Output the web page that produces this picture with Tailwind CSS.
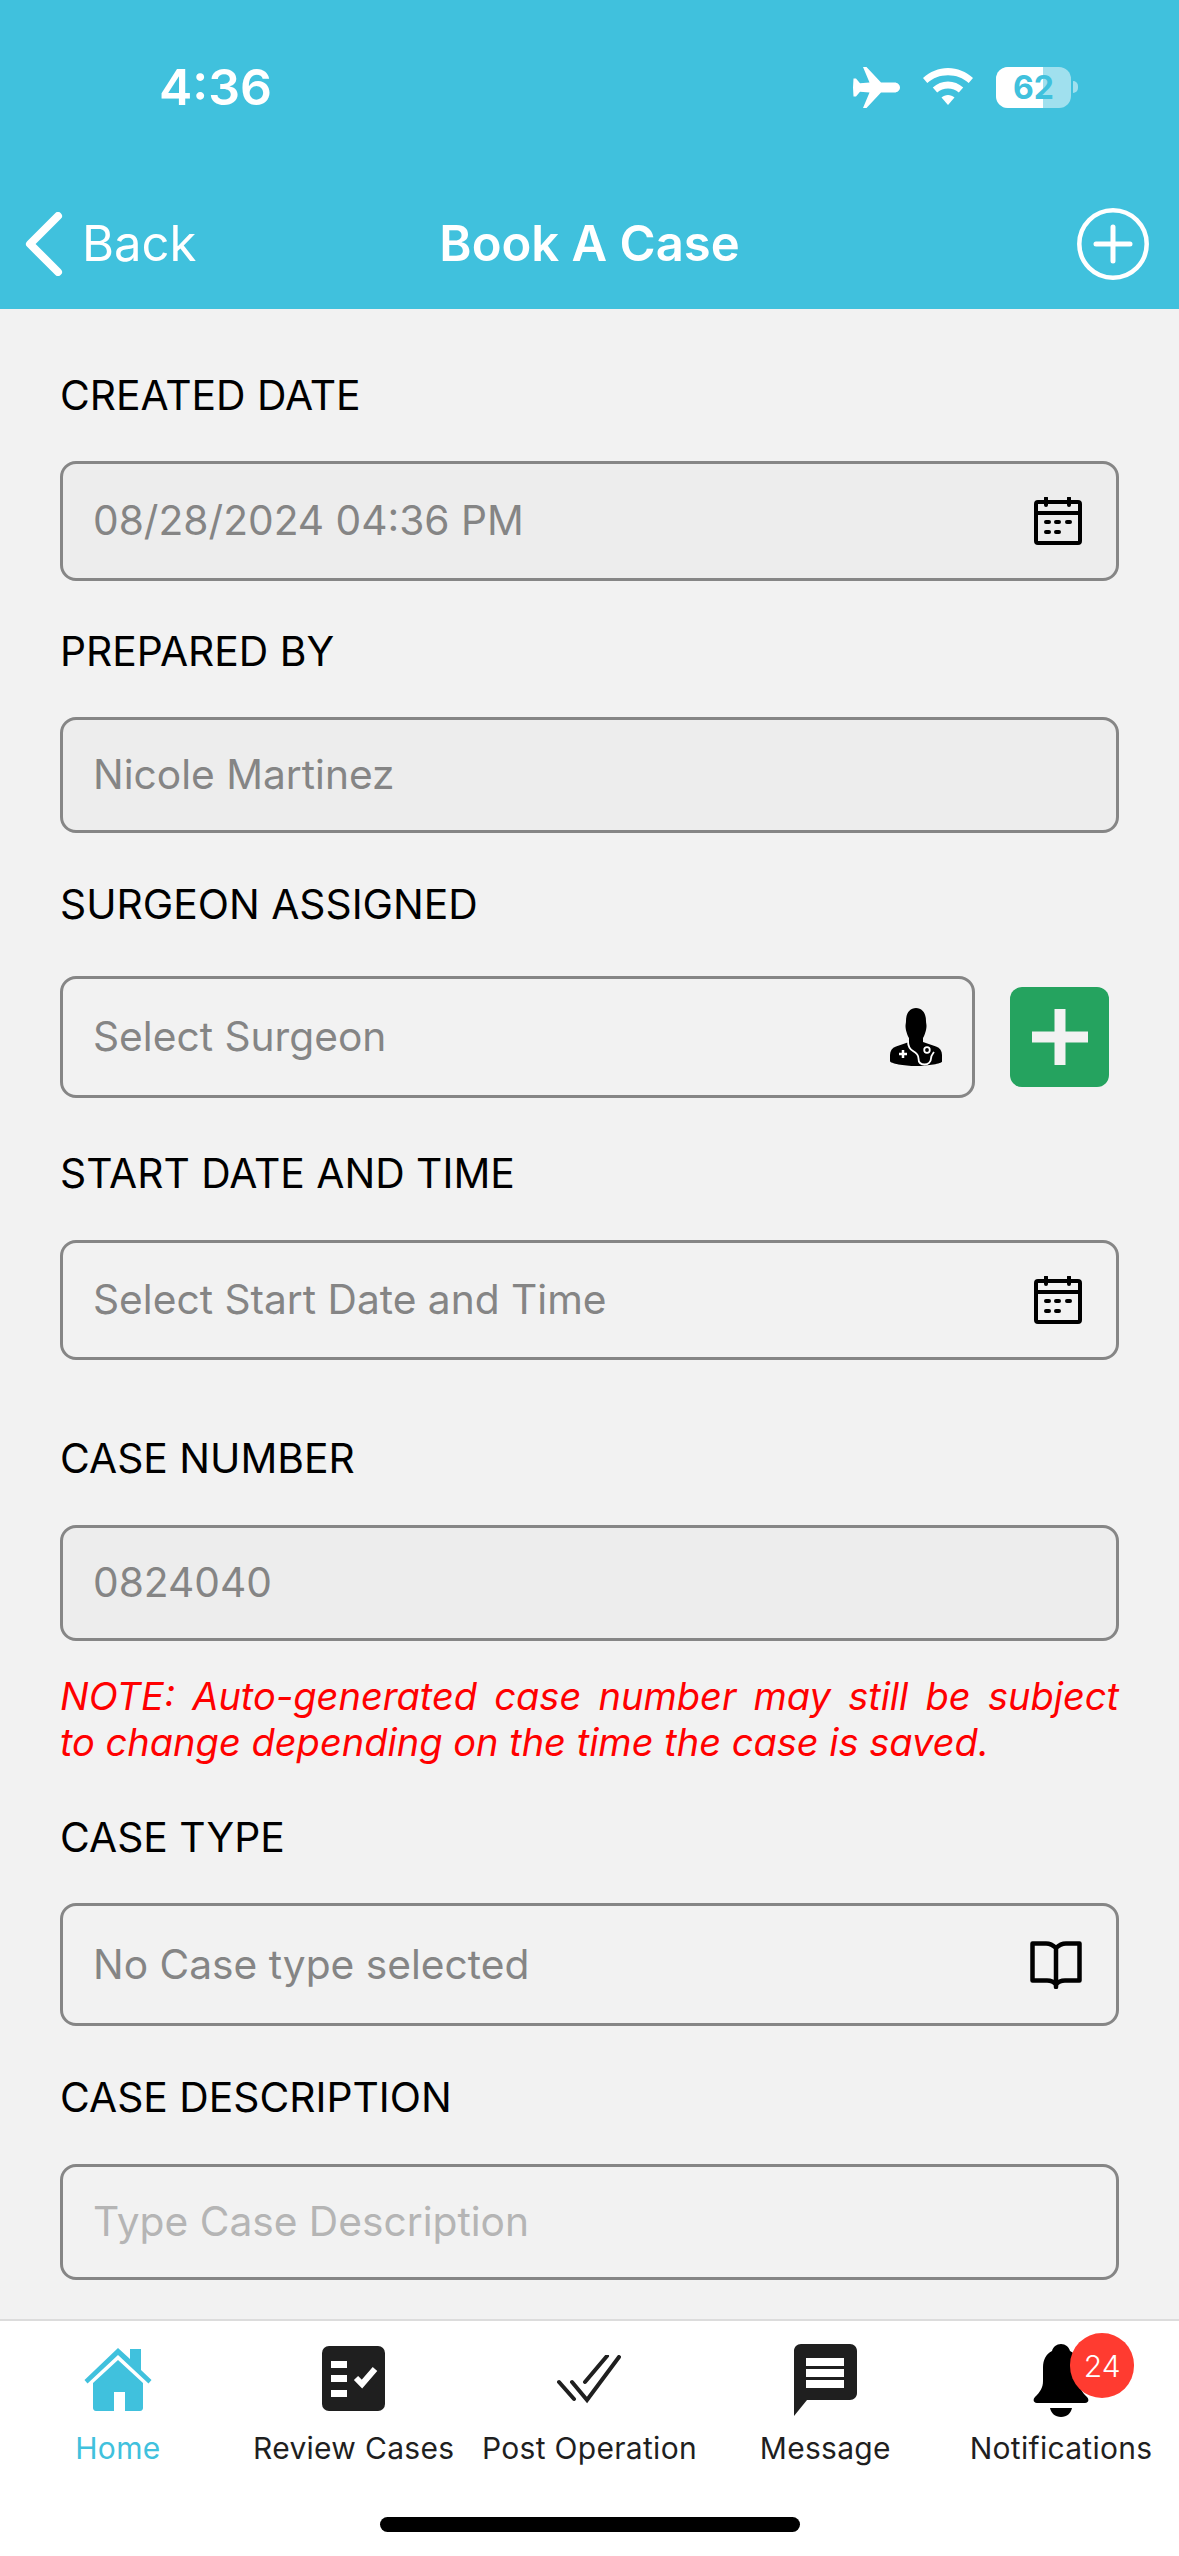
<!DOCTYPE html>
<html lang="en">
<head>
<meta charset="utf-8">
<script src="https://cdn.jsdelivr.net/npm/@tailwindcss/browser@4"></script>
<title>Book A Case</title>
</head>
<body class="m-0">
<div class="w-[1179px] h-[2556px] overflow-hidden flex flex-col bg-[#f2f2f2] font-['Inter',sans-serif] text-black">
  <!-- Header -->
  <header class="h-[309px] shrink-0 bg-[#40c1dd] text-white flex flex-col">
    <div class="h-[174px] pt-[58px] pl-[159px] pr-[101px] flex items-start justify-between">
      <span class="text-[50px] leading-[58px] font-semibold">4:36</span>
      <div class="flex items-start pt-[9px]">
        <svg class="w-[47px] h-[41px]" viewBox="0 0 47 41" fill="white"><path d="M10 0h3.500l14.500 15.500h13.500c3 0 5.500 2.300 5.500 5s-2.500 5-5.500 5H28L13.500 41H10l6.500-15.500-9.500-.8L3 29.500H0.500L0 20.500l.5-9H3l4 4.800 9.500-.8z"/></svg>
        <svg class="w-[50px] h-[37px] ml-[23px] mt-[1px]" viewBox="0 0 50 37" fill="white"><path d="M25 0c9.500 0 18 3.700 25 10l-4.300 5C40 10 33 7.300 25 7.300S10 10 4.300 15L0 10C7 3.700 15.500 0 25 0z"/><path d="M25 13.500c5.800 0 10.800 2.200 15.200 6l-4.400 5c-3-2.600-6.700-4-10.800-4s-7.800 1.400-10.800 4l-4.400-5c4.400-3.800 9.400-6 15.200-6z"/><path d="M25 27c2.500 0 4.700.9 6.500 2.500L25 37l-6.500-7.500C20.300 27.900 22.500 27 25 27z"/></svg>
        <div class="relative w-[75px] h-[41px] ml-[23px] rounded-[12px] overflow-hidden bg-white/50">
          <div class="w-[47px] h-[41px] bg-white"></div>
          <span class="absolute inset-0 flex items-center justify-center text-[#40c1dd] text-[32px] leading-[41px] font-bold">62</span>
        </div>
        <div class="w-[5px] h-[12px] mt-[14px] ml-[2px] rounded-r-full bg-white/50"></div>
      </div>
    </div>
    <div class="relative h-[135px] flex items-start justify-center">
      <div class="absolute left-[25px] top-[38px] flex items-center">
        <svg class="w-[38px] h-[64px]" viewBox="0 0 38 64" fill="none" stroke="white" stroke-width="8" stroke-linecap="round" stroke-linejoin="round"><path d="M33 4 5 32l28 28"/></svg>
        <span class="ml-[19px] text-[49px] leading-[64px] text-white">Back</span>
      </div>
      <span class="mt-[38px] text-[49px] leading-[64px] font-semibold">Book A Case</span>
      <svg class="absolute right-[30px] top-[34px] w-[72px] h-[72px]" viewBox="0 0 72 72" fill="none" stroke="white" stroke-linecap="round"><circle cx="36" cy="36" r="33.700" stroke-width="4.500"/><path d="M36 19v34M19 36h34" stroke-width="5"/></svg>
    </div>
  </header>

  <!-- Form -->
  <main class="flex-1 min-h-0 px-[60px] flex flex-col">
    <label class="mt-[63px] h-[46px] text-[40.8px] leading-[46px]">CREATED DATE</label>
    <div class="mt-[43px] h-[120px] rounded-[16px] border-[3px] border-[#868686] bg-[#ededed] pl-[30px] pr-[34px] flex items-center justify-between">
      <span class="text-[40.7px] text-[#858585]">08/28/2024 04:36 PM</span>
      <svg class="w-[48px] h-[48px]" viewBox="0 0 48 48" fill="none" stroke="black" stroke-width="4" stroke-linecap="round" stroke-linejoin="round"><rect x="2" y="5" width="44" height="41" rx="2"/><path d="M2 16h44M12 1v7M35 1v7"/><path d="M12 25h3M22 25h3M33 25h3M12 35h3M22 35h3"/></svg>
    </div>
    <label class="mt-[47px] h-[46px] text-[40.8px] leading-[46px]">PREPARED BY</label>
    <div class="mt-[43px] h-[116px] rounded-[16px] border-[3px] border-[#868686] bg-[#ededed] pl-[30px] flex items-center">
      <span class="text-[40.7px] text-[#858585]">Nicole Martinez</span>
    </div>
    <label class="mt-[48px] h-[46px] text-[40.8px] leading-[46px]">SURGEON ASSIGNED</label>
    <div class="mt-[49px] flex items-center">
      <div class="w-[915px] h-[122px] rounded-[16px] border-[3px] border-[#868686] pl-[30px] pr-[30px] flex items-center justify-between">
        <span class="text-[40.7px] text-[#858585]">Select Surgeon</span>
        <svg class="w-[52px] h-[58px]" viewBox="0 0 52 58" fill="black"><path d="M26 0c6 0 10 5 10 13 0 2 .5 3 .5 5 0 4-2 9.500-3.500 12v4l13 4.500c4 1.400 6 4.500 6 8.500v6.500C52 55.500 38 58 26 58S0 55.500 0 53v-6c0-4 2-7.100 6-8.500L19 34v-4c-1.500-2.500-3.500-8-3.500-12 0-2 .5-3 .5-5C16 5 20 0 26 0z"/><path d="M18 33c0 5 1.500 8 5 10 3 1.700 5.500 3.500 5.500 7.500 0 4 2.500 6 6 6s6.500-2.500 6.500-6c0-3 1.500-4.500 3-6.500" fill="none" stroke="white" stroke-width="1.800"/><circle cx="37" cy="42" r="2.800" fill="none" stroke="white" stroke-width="1.800"/><path d="M9 46h8M13 42v8" fill="none" stroke="white" stroke-width="2.500"/></svg>
      </div>
      <button class="ml-[35px] w-[99px] h-[100px] rounded-[12px] bg-[#25a35f] flex items-center justify-center">
        <svg class="w-[56px] h-[56px]" viewBox="0 0 56 56" fill="#f2f2f2"><path d="M22.500 0h11v22.500H56v11H33.500V56h-11V33.500H0v-11h22.500z"/></svg>
      </button>
    </div>
    <label class="mt-[52px] h-[46px] text-[40.8px] leading-[46px]">START DATE AND TIME</label>
    <div class="mt-[44px] h-[120px] rounded-[16px] border-[3px] border-[#868686] pl-[30px] pr-[34px] flex items-center justify-between">
      <span class="text-[40.7px] text-[#858585]">Select Start Date and Time</span>
      <svg class="w-[48px] h-[48px]" viewBox="0 0 48 48" fill="none" stroke="black" stroke-width="4" stroke-linecap="round" stroke-linejoin="round"><rect x="2" y="5" width="44" height="41" rx="2"/><path d="M2 16h44M12 1v7M35 1v7"/><path d="M12 25h3M22 25h3M33 25h3M12 35h3M22 35h3"/></svg>
    </div>
    <label class="mt-[75px] h-[46px] text-[40.8px] leading-[46px]">CASE NUMBER</label>
    <div class="mt-[44px] h-[116px] rounded-[16px] border-[3px] border-[#868686] bg-[#ededed] pl-[30px] flex items-center">
      <span class="text-[40.7px] text-[#858585]">0824040</span>
    </div>
    <p class="mt-[32px] text-[38px] leading-[46px] italic text-[#ff0000]"><span class="block text-justify [text-align-last:justify]">NOTE: Auto-generated case number may still be subject</span><span class="block">to change depending on the time the case is saved.</span></p>
    <label class="mt-[49px] h-[46px] text-[40.8px] leading-[46px]">CASE TYPE</label>
    <div class="mt-[43px] h-[123px] rounded-[16px] border-[3px] border-[#868686] pl-[30px] pr-[34px] flex items-center justify-between">
      <span class="text-[40.7px] text-[#858585]">No Case type selected</span>
      <svg class="w-[52px] h-[48px]" viewBox="0 0 52 48" fill="none" stroke="black" stroke-width="4.500" stroke-linecap="round" stroke-linejoin="round"><path d="M26 7c-3-3-6-4.500-10-4.500H2.500v37H17c4 0 7 1.500 9 4 2-2.500 5-4 9-4h14.500v-37H36c-4 0-7 1.500-10 4.500zM26 7v39"/></svg>
    </div>
    <label class="mt-[48px] h-[46px] text-[40.8px] leading-[46px]">CASE DESCRIPTION</label>
    <div class="mt-[44px] h-[116px] rounded-[16px] border-[3px] border-[#868686] pl-[30px] flex items-center">
      <span class="text-[40.7px] text-[#b5b5b5]">Type Case Description</span>
    </div>
  </main>

  <!-- Tab bar -->
  <nav class="relative h-[237px] shrink-0 bg-white border-t-2 border-[#dcdcdc] grid grid-cols-5 text-[30px] leading-[36px] tracking-[0.3px] text-[#1f1f1f]">
    <a class="h-[145px] flex flex-col items-center justify-end text-[#40c1dd]">
      <svg class="w-[68px] h-[63px] mb-[19px]" viewBox="0 0 68 63" fill="#40c1dd"><path d="M34 0 46 11V1h11v21l10.500 10-3 3.500L34 7 3.500 35.500l-3-3.500z"/><path d="M34 12 59 35v25c0 1.500-1 3-3 3H41V44H30v19H12c-2 0-3-1.500-3-3V35z"/></svg>
      <span>Home</span>
    </a>
    <a class="h-[145px] flex flex-col items-center justify-end">
      <svg class="w-[63px] h-[65px] mb-[19px]" viewBox="0 0 63 65"><rect width="63" height="65" rx="7" fill="#1f1f1f"/><path d="M9 15h16v7H9zM9 29h16v7H9zM9 44h16v7H9z" fill="white"/><path d="m34 32 6 6 13-15" fill="none" stroke="white" stroke-width="6"/></svg>
      <span>Review Cases</span>
    </a>
    <a class="h-[145px] flex flex-col items-center justify-end">
      <svg class="w-[64px] h-[49px] mb-[26px]" viewBox="0 0 64 49" fill="none" stroke="#1f1f1f" stroke-width="4" stroke-linecap="round"><path d="m2 27 15 17"/><path d="m15 27 15 18L62 2"/><path d="m28 27 22-26"/></svg>
      <span>Post Operation</span>
    </a>
    <a class="h-[145px] flex flex-col items-center justify-end">
      <svg class="w-[63px] h-[72px] mb-[14px]" viewBox="0 0 63 72"><path d="M7 0h49c4 0 7 3 7 7v42c0 4-3 7-7 7H13L0 72V7c0-4 3-7 7-7z" fill="#1f1f1f"/><path d="M12 14h38v8H12zM12 25h38v8H12zM12 36h38v8H12z" fill="white"/></svg>
      <span>Message</span>
    </a>
    <a class="relative h-[145px] flex flex-col items-center justify-end">
      <svg class="w-[56px] h-[73px] mb-[13px]" viewBox="0 0 56 73" fill="black"><path d="M28 0c4.500 0 8 3 9 7 6 3 9 9 9 16v14c0 7 3 11 8 16 2.500 2.500 1.500 6-2 6H4c-3.500 0-4.500-3.500-2-6 5-5 8-9 8-16V23c0-7 3-13 9-16 1-4 4.500-7 9-7z"/><path d="M17 64h22c-1 5-5 9-11 9s-10-4-11-9z"/></svg>
      <span>Notifications</span>
      <span class="absolute left-[127px] top-[12px] w-[64px] h-[65px] rounded-full bg-[#ff3b30] text-white flex items-center justify-center text-[30px] font-light tracking-normal">24</span>
    </a>
    <div class="absolute left-[380px] top-[196px] w-[420px] h-[15px] rounded-full bg-black"></div>
  </nav>
</div>
</body>
</html>
